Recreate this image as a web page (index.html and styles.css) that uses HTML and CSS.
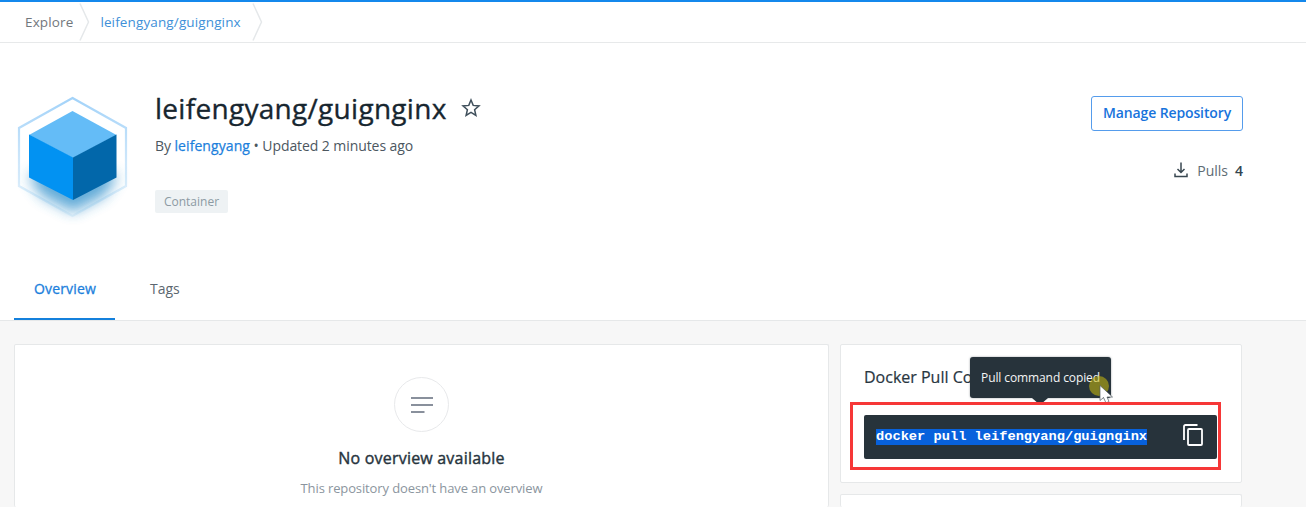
FILE: index.html
```html
<!DOCTYPE html>
<html lang="en">
<head>
<meta charset="utf-8">
<title>leifengyang/guignginx</title>
<link rel="stylesheet" href="styles.css">
</head>
<body>
<nav class="crumbs">
  <a class="crumb">Explore</a>
  <svg class="chevron" width="12" height="40" viewBox="0 0 12 40"><path d="M1 1.500L9.500 20L1 38.500"/></svg>
  <a class="crumb crumb-current">leifengyang/guignginx</a>
  <svg class="chevron" width="12" height="40" viewBox="0 0 12 40"><path d="M1 1.500L9.500 20L1 38.500"/></svg>
</nav>
<header class="hero">
  <svg class="cube" width="120" height="140" viewBox="0 0 120 140">
    <defs>
      <linearGradient id="hex" x1="0" y1="0" x2="0" y2="1"><stop offset="0" stop-color="#a3d3f9"/><stop offset=".4" stop-color="#c4e2fa"/><stop offset="1" stop-color="#edf6fc"/></linearGradient>
      <filter id="soft" x="-40%" y="-60%" width="180%" height="220%"><feGaussianBlur stdDeviation="7"/></filter>
    </defs>
    <path d="M60.500 10L114 40V98L60.500 128L7 98V40Z" fill="none" stroke="url(#hex)" stroke-width="2.200"/>
    <path d="M16 88L60.500 72L106 88L92 108L61 124L30 108Z" fill="#2f8fcb" opacity=".75" filter="url(#soft)"/>
    <path d="M60.500 23L104.500 47L61 70L17 47Z" fill="#64bcf7"/>
    <path d="M17 46.500L61 69.500V112L17 89.500Z" fill="#0292f2"/>
    <path d="M104.500 46.500L61 69.500V112L104.500 89.500Z" fill="#0267aa"/>
  </svg>
  <div class="summary">
    <div class="title-row">
      <h1 class="title">leifengyang/guignginx</h1>
      <svg class="star" width="20" height="20" viewBox="0 0 20 20"><path d="M10 2L12.200 7.400L18 7.900L13.600 11.700L14.900 17.400L10 14.400L5.100 17.400L6.400 11.700L2 7.900L7.800 7.400Z"/></svg>
    </div>
    <p class="byline">By <a class="owner">leifengyang</a> • Updated 2 minutes ago</p>
    <span class="tag">Container</span>
  </div>
  <div class="actions">
    <button class="manage">Manage Repository</button>
    <div class="pulls">
      <svg width="16" height="18" viewBox="0 0 16 18"><path d="M8 1.500V11M4.500 8L8 11.500L11.500 8M2 12.500V15.500H14V12.500"/></svg>
      <span>Pulls</span><b class="pull-count">4</b>
    </div>
  </div>
</header>
<div class="tabs"><a class="tab tab-active">Overview</a><a class="tab">Tags</a></div>
<main class="content">
  <section class="card overview">
    <div class="empty-icon"><svg width="24" height="18" viewBox="0 0 24 18"><path d="M1 2H23M1 9H23M1 16H14.500"/></svg></div>
    <h2 class="empty-title">No overview available</h2>
    <p class="empty-text">This repository doesn't have an overview</p>
  </section>
  <aside class="side">
    <section class="card pull-card">
      <h2 class="pull-title">Docker Pull Command</h2>
      <div class="command">
        <code class="command-text">docker pull leifengyang/guignginx</code>
        <svg class="copy" width="22" height="24" viewBox="0 0 22 24"><path d="M2 17V3.500Q2 2 3.500 2H15.500"/><rect x="6" y="6" width="14" height="16" rx="1"/></svg>
      </div>
      <div class="tooltip">Pull command copied</div>
      <div class="click-spot"></div>
      <svg class="cursor" width="15" height="20" viewBox="0 0 15 20"><path d="M1 .500V15.500L4.500 12.500L7 18L10 16.500L8 12H13.500Z"/></svg>
      <div class="highlight"></div>
    </section>
    <section class="card next-card"></section>
  </aside>
</main>
</body>
</html>
```
FILE: styles.css
```css
* { box-sizing: border-box; }
body {
  margin: 0;
  height: 507px;
  overflow: hidden;
  display: flex;
  flex-direction: column;
  background: #fff;
  color: #4c575f;
  font-family: "Open Sans", sans-serif;
  font-size: 14px;
}
h1, h2, p { margin: 0; }
svg { display: block; flex: none; fill: none; }

.crumbs {
  height: 43px;
  flex: none;
  display: flex;
  align-items: center;
  padding-left: 25px;
  border-top: 2px solid #1488ec;
  border-bottom: 1px solid #e7e9ea;
}
.crumb { color: #72777c; font-size: 13.5px; line-height: 20px; letter-spacing: .13px; }
.crumb-current { color: #4090d8; }
.chevron { margin: 0 9px 0 6px; stroke: #e5e8ea; stroke-width: 1.5; }
.crumb-current + .chevron { margin-left: 11px; }

.hero {
  height: 215px;
  flex: none;
  display: flex;
  padding-left: 12px;
  padding-right: 63px;
}
.cube { margin-top: 45px; }
.summary { margin: 45px 0 0 23px; }
.title-row { display: flex; align-items: center; height: 40px; }
.title {
  font-size: 28px;
  font-weight: 400;
  line-height: 40px;
  letter-spacing: .29px;
  color: #17262f;
  -webkit-text-stroke: .35px;
}
.star { margin-left: 14px; stroke: #40505c; stroke-width: 1.5; }
.byline { margin-top: 8px; line-height: 20px; letter-spacing: -.08px; }
.owner { color: #1c80dc; letter-spacing: .08px; -webkit-text-stroke: .25px; }
.tag {
  display: flex;
  align-items: center;
  justify-content: center;
  width: 73px;
  height: 23px;
  margin-top: 34px;
  border-radius: 2px;
  background: #eef2f4;
  color: #8c9aa3;
  font-size: 12px;
}
.actions { margin: 53px 0 0 auto; }
.manage {
  display: block;
  width: 152px;
  height: 35px;
  padding: 0 0 2px;
  border: 1px solid #559cec;
  border-radius: 3px;
  background: #fff;
  color: #1773dc;
  font: 600 14px "Open Sans", sans-serif;
  letter-spacing: -.12px;
}
.pulls {
  display: flex;
  justify-content: flex-end;
  align-items: center;
  height: 20px;
  margin-top: 29px;
  color: #5e6b74;
}
.pulls svg { margin-right: 8px; stroke: #394750; stroke-width: 1.5; }
.pull-count { margin-left: 7px; color: #34454f; font-weight: 600; }

.tabs {
  height: 63px;
  flex: none;
  display: flex;
  padding-left: 14px;
  border-bottom: 1px solid #e6e8e9;
}
.tab { height: 62px; padding: 21px 20px; line-height: 20px; color: #5c6770; }
.tab + .tab { padding-left: 35px; }
.tab-active {
  width: 101px;
  color: #1c80dc;
  border-bottom: 2px solid #1480dc;
  letter-spacing: .15px;
  -webkit-text-stroke: .3px;
}

.content {
  flex: 1;
  min-height: 0;
  display: flex;
  gap: 11px;
  padding: 23px 0 0 14px;
  background: #f7f7f7;
}
.card { border: 1px solid #e6e8e9; border-radius: 2px; background: #fff; }
.overview {
  width: 815px;
  display: flex;
  flex-direction: column;
  align-items: center;
  padding-top: 32px;
  border-bottom: 0;
}
.empty-icon {
  width: 55px;
  height: 55px;
  display: grid;
  place-items: center;
  border: 1px solid #e8e9eb;
  border-radius: 50%;
}
.empty-icon svg { stroke: #89909c; stroke-width: 1.8; }
.empty-title {
  margin-top: 15px;
  font-size: 16px;
  font-weight: 400;
  line-height: 22px;
  letter-spacing: .2px;
  color: #27343d;
  -webkit-text-stroke: .4px;
}
.empty-text { margin-top: 9px; font-size: 13px; line-height: 20px; letter-spacing: -.12px; color: #8b959e; }

.side { width: 402px; display: flex; flex-direction: column; gap: 11px; }
.pull-card { position: relative; flex: none; height: 139px; padding: 21px 24px 0 23px; }
.pull-title { font-size: 16px; font-weight: 400; line-height: 22px; color: #29363f; -webkit-text-stroke: .2px; }
.command {
  display: flex;
  align-items: center;
  justify-content: space-between;
  height: 44px;
  margin-top: 27px;
  padding: 0 13px 0 12px;
  border-radius: 2px;
  background: #27333b;
}
.command-text {
  font: bold 13.7px/16px "Liberation Mono", monospace;
  color: #fff;
  background: #0761dc;
}
.copy { stroke: #fff; stroke-width: 1.8; margin-top: -4px; }
.next-card { flex: 1; border-bottom: 0; }

/* overlays on the pull card */
.tooltip {
  position: absolute;
  left: 129px;
  top: 12px;
  width: 141px;
  height: 41px;
  border-radius: 3px;
  background: #27333b;
  box-shadow: 0 0 2px #27333b80;
  color: #f4f5f6;
  font-size: 12px;
  line-height: 41px;
  letter-spacing: -.1px;
  text-align: center;
}
.tooltip::after {
  content: "";
  position: absolute;
  top: 41px;
  left: 62px;
  border: 8px solid transparent;
  border-top: 7px solid #27333b;
  border-bottom: 0;
}
.click-spot {
  position: absolute;
  left: 248px;
  top: 31px;
  width: 20px;
  height: 20px;
  border-radius: 50%;
  background: #c6b80e90;
}
.cursor { position: absolute; left: 258px; top: 40px; fill: #fff; stroke: #535c62; stroke-width: .7; }
.highlight {
  position: absolute;
  left: 9px;
  top: 57px;
  width: 371px;
  height: 68px;
  border: 3px solid #f63737;
}
```
